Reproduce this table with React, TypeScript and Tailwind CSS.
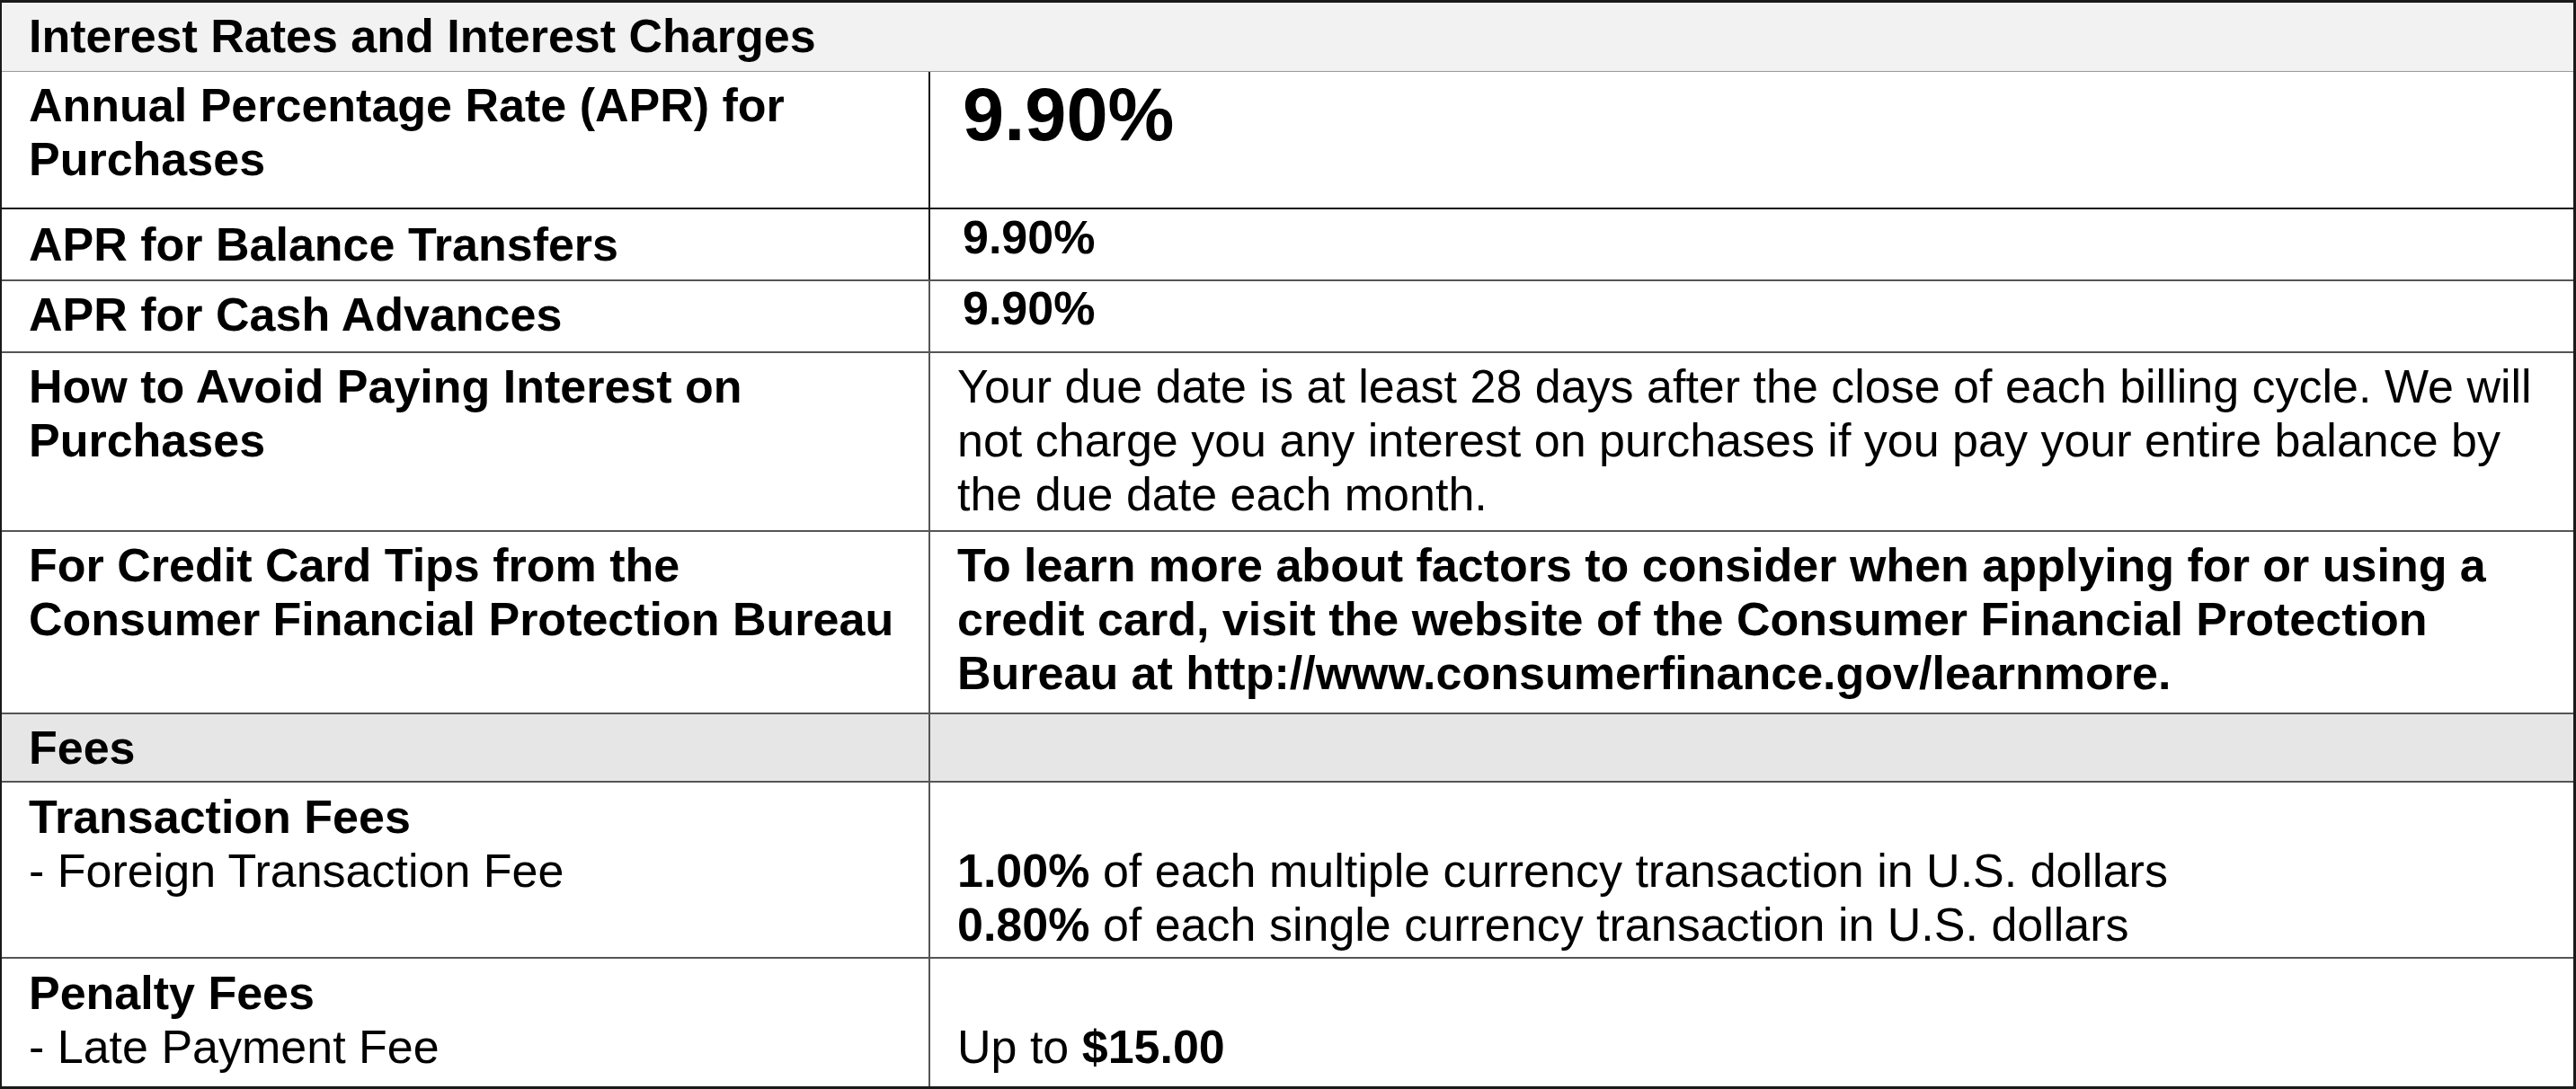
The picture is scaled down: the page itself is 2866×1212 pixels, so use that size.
const FONT = "font-['Liberation_Sans',Arial,sans-serif]";

type Row = {
    label: React.ReactNode;
    value: React.ReactNode;
    rowClass: string;
    divider: string;
    valueClass?: string;
};

const ROWS: Row[] = [
    {
        label: (
            <p className="font-bold">
                Annual Percentage Rate (APR) for
                <br />
                Purchases
            </p>
        ),
        value: <p className="text-[83px] leading-[96px] font-bold">9.90%</p>,
        rowClass: "h-[153px] border-b-2 border-[#111]",
        divider: "border-[#111]",
        valueClass: "pl-[36px] pt-0",
    },
    {
        label: <p className="font-bold pt-[2px]">APR for Balance Transfers</p>,
        value: <p className="font-bold pt-px">9.90%</p>,
        rowClass: "h-[80px] border-b-2 border-[#555]",
        divider: "border-[#111]",
        valueClass: "pl-[36px] pt-0",
    },
    {
        label: <p className="font-bold">APR for Cash Advances</p>,
        value: <p className="font-bold">9.90%</p>,
        rowClass: "h-[80px] border-b-2 border-[#555]",
        divider: "border-[#555]",
        valueClass: "pl-[36px] pt-0",
    },
    {
        label: (
            <p className="font-bold">
                How to Avoid Paying Interest on
                <br />
                Purchases
            </p>
        ),
        value: (
            <p>
                Your due date is at least 28 days after the close of each billing cycle. We will not
                charge you any interest on purchases if you pay your entire balance by the due date
                each month.
            </p>
        ),
        rowClass: "h-[199px] border-b-2 border-[#555]",
        divider: "border-[#555]",
    },
    {
        label: (
            <p className="font-bold">
                For Credit Card Tips from the
                <br />
                Consumer Financial Protection Bureau
            </p>
        ),
        value: (
            <p className="font-bold">
                To learn more about factors to consider when applying for or using a credit card,
                visit the website of the Consumer Financial Protection Bureau at
                http://www.consumerfinance.gov/learnmore.
            </p>
        ),
        rowClass: "h-[203px] border-b-2 border-[#555]",
        divider: "border-[#555]",
    },
    {
        label: <p className="font-bold">Fees</p>,
        value: null,
        rowClass: "h-[76px] border-b-2 border-[#555] bg-[#e6e6e6]",
        divider: "border-[#555]",
    },
    {
        label: (
            <>
                <p className="font-bold pt-px">Transaction Fees</p>
                <p>- Foreign Transaction Fee</p>
            </>
        ),
        value: (
            <div className="pt-[61px]">
                <p>
                    <span className="font-bold">1.00%</span> of each multiple currency transaction in
                    U.S. dollars
                </p>
                <p>
                    <span className="font-bold">0.80%</span> of each single currency transaction in
                    U.S. dollars
                </p>
            </div>
        ),
        rowClass: "h-[196px] border-b-2 border-[#555]",
        divider: "border-[#555]",
    },
    {
        label: (
            <>
                <p className="font-bold pt-px">Penalty Fees</p>
                <p>- Late Payment Fee</p>
            </>
        ),
        value: (
            <p className="pt-[61px]">
                Up to <span className="font-bold">$15.00</span>
            </p>
        ),
        rowClass: "h-[142px]",
        divider: "border-[#555]",
    },
];

export default function App() {
    return (
        <div className={`${FONT} w-[2866px] h-[1212px] bg-white text-black text-[52px] leading-[60px]`}>
            <div className="w-full h-full flex flex-col border-l-2 border-t-[3px] border-r-[3px] border-b-[3px] border-[#1a1a1a]">
                {/* Section header spans both columns */}
                <div className="h-[77px] shrink-0 bg-[#f2f2f2] border-b border-[#9a9a9a] pl-[30px] pt-[7px]">
                    <p className="font-bold">Interest Rates and Interest Charges</p>
                </div>

                {ROWS.map((row, i) => (
                    <div key={i} className={`flex shrink-0 ${row.rowClass}`}>
                        <div className={`w-[1033px] shrink-0 border-r-2 ${row.divider} pl-[30px] pt-[7px]`}>
                            {row.label}
                        </div>
                        <div className={`flex-1 pr-[28px] ${row.valueClass ?? "pl-[30px] pt-[7px]"}`}>
                            {row.value}
                        </div>
                    </div>
                ))}
            </div>
        </div>
    );
}
